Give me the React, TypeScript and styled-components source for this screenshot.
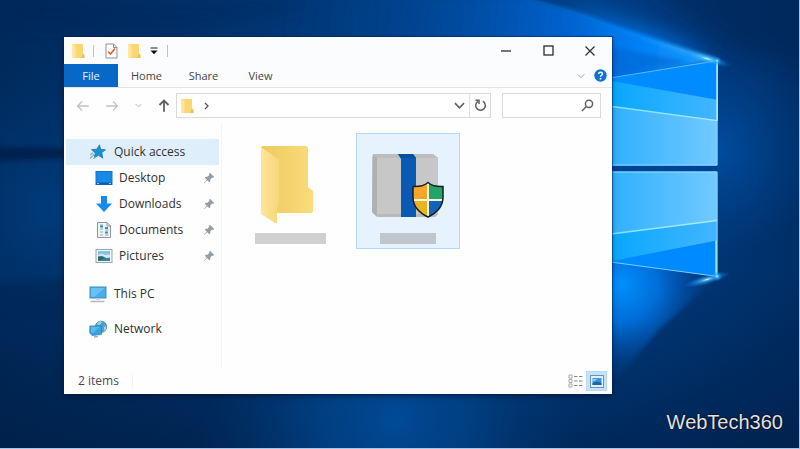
import React from "react";
import styled, { createGlobalStyle } from "styled-components";

const GlobalStyle = createGlobalStyle`
  * { box-sizing: border-box; }
  body {
    margin: 0;
    font-family: "Open Sans", "Noto Sans", sans-serif;
    font-size: 12px;
    line-height: 16px;
    color: #333;
    background: #00285a;
  }
  button, input {
    font: inherit;
    color: inherit;
    margin: 0;
    padding: 0;
    border: 0;
    background: none;
  }
  svg { display: block; flex: none; }
`;

const Desktop = styled.main`
  position: relative;
  display: flex;
  min-height: 100vh;
  padding: 37px 23.5% 55px 8%;
  overflow: hidden;
  box-shadow: inset -1px -1px 0 #a9c4e6;
`;

const WallpaperArt = styled.svg`
  position: absolute;
  inset: 0;
  width: 100%;
  height: 100%;
  padding: 0 1px 1px 0;
`;

const Watermark = styled.div`
  position: absolute;
  right: 17px;
  bottom: 15px;
  font-family: "Liberation Sans", Arial, sans-serif;
  font-size: 20px;
  line-height: 24px;
  color: #e2e2e2;
  text-shadow: 0 0 1px #000, 0 0 2px #001;
`;

const Window = styled.section`
  position: relative;
  flex: 1;
  min-width: 0;
  display: flex;
  flex-direction: column;
  background: #fefefe;
  box-shadow: 0 0 0 1px rgba(0, 30, 75, 0.45), 0 2px 5px rgba(0, 10, 40, 0.5);
`;

const TitleBar = styled.header`
  display: flex;
  align-items: center;
  justify-content: space-between;
  height: 27px;
  padding: 0 4px 0 7px;
  background: #fbfcfd;
`;

const QuickTools = styled.div`
  display: flex;
  align-items: center;
  gap: 8px;
`;

const Separator = styled.span`
  width: 1px;
  height: 12px;
  background: #c2c2c2;
`;

const ToolButton = styled.button<{ $narrow?: boolean }>`
  display: flex;
  justify-content: center;
  align-items: center;
  width: ${(p) => (p.$narrow ? 10 : 14)}px;
  height: 16px;
`;

const ToolPair = styled.div`
  display: flex;
  gap: 9px;
  padding-left: 2px;
`;

const WindowControls = styled.div`
  display: flex;
`;

const ControlButton = styled.button`
  display: grid;
  place-items: center;
  width: 42px;
  height: 26px;
  color: #2c2c2c;
  &:last-child { width: 36px; margin-left: 3px; }
`;

const Ribbon = styled.div`
  display: flex;
  align-items: center;
  justify-content: space-between;
  height: 24px;
  padding-right: 5px;
  background: #fbfcfd;
  border-bottom: 1px solid #e2e4e6;
`;

const Tabs = styled.nav`
  display: flex;
  height: 100%;
`;

const Tab = styled.button<{ $primary?: boolean }>`
  width: ${(p) => (p.$primary ? 54 : 57)}px;
  color: ${(p) => (p.$primary ? "#e9f3ff" : "#444")};
  background: ${(p) => (p.$primary ? "#0768c5" : "transparent")};
  font-size: 11px;
`;

const RibbonTools = styled.div`
  display: flex;
  align-items: center;
  gap: 9px;
`;

const IconButton = styled.button<{ $tone?: string }>`
  display: grid;
  place-items: center;
  color: ${(p) => p.$tone ?? "#606060"};
`;

const NavBar = styled.div`
  display: flex;
  align-items: center;
  gap: 11px;
  height: 35px;
  padding: 0 11px 0 12px;
`;

const NavButtons = styled.div`
  display: grid;
  grid-template-columns: 14px 14px 8px 14px;
  column-gap: 15px;
  width: 89px;
  align-items: center;
`;

const AddressBox = styled.div`
  display: flex;
  align-items: center;
  flex: 1;
  height: 25px;
  padding-left: 4px;
  border: 1px solid #d9d9d9;
  background: #fff;
`;

const PathInput = styled.input`
  flex: 1;
  min-width: 0;
  height: 22px;
  padding: 0 8px;
  outline: none;
`;

const RefreshButton = styled(IconButton)`
  width: 21px;
  height: 23px;
  margin-left: 4px;
  border-left: 1px solid #e2e2e2;
`;

const SearchBox = styled.label`
  display: flex;
  align-items: center;
  width: 99px;
  height: 25px;
  padding: 0 6px;
  border: 1px solid #d9d9d9;
  background: #fff;
  color: #606060;
`;

const Body = styled.div`
  display: flex;
  flex: 1;
`;

const Sidebar = styled.nav`
  width: 158px;
  padding: 16px 2px 0;
  border-right: 1px solid #f5f6f7;
`;

const NavItem = styled.a<{ $child?: boolean; $active?: boolean }>`
  display: flex;
  align-items: center;
  gap: ${(p) => (p.$child ? 6 : 7)}px;
  height: 26px;
  padding: 0 4px 0 ${(p) => (p.$child ? 29 : 23)}px;
  color: #303030;
  text-decoration: none;
  background: ${(p) => (p.$active ? "#dfeefb" : "transparent")};
`;

const NavLabel = styled.span`
  flex: 1;
  white-space: nowrap;
`;

const DeviceGroup = styled.div`
  display: grid;
  gap: 9px;
  padding-top: 12px;
`;

const Files = styled.div`
  display: flex;
  align-items: flex-start;
  gap: 14px;
  padding: 10px 16px;
`;

const FileTile = styled.button<{ $selected?: boolean }>`
  display: flex;
  flex-direction: column;
  justify-content: flex-end;
  align-items: center;
  gap: ${(p) => (p.$selected ? 14 : 8)}px;
  width: 104px;
  height: 116px;
  padding-bottom: 4px;
  border: 1px solid ${(p) => (p.$selected ? "#b4daf8" : "transparent")};
  background: ${(p) => (p.$selected ? "#e6f2fd" : "transparent")};
`;

const NamePlaceholder = styled.span<{ $short?: boolean }>`
  width: ${(p) => (p.$short ? 56 : 71)}px;
  height: 11px;
  background: ${(p) => (p.$short ? "#bfc6cd" : "#d0d0d0")};
`;

const StatusBar = styled.footer`
  display: flex;
  align-items: center;
  justify-content: space-between;
  height: 26px;
  padding: 0 5px 0 14px;
  color: #484858;
`;

const ItemCount = styled.span`
  padding-right: 13px;
  border-right: 1px solid #f3f4f5;
`;

const ViewModes = styled.div`
  display: flex;
`;

const ViewButton = styled.button<{ $active?: boolean }>`
  display: grid;
  place-items: center;
  width: 21px;
  height: 20px;
  border: 1px solid ${(p) => (p.$active ? "#b4dbf8" : "transparent")};
  background: ${(p) => (p.$active ? "#c5e3fa" : "transparent")};
`;

const Wallpaper = () => (
  <WallpaperArt viewBox="0 0 800 449" preserveAspectRatio="xMidYMid slice" aria-hidden="true">
    <defs>
      <linearGradient id="base" x1="0" x2="1">
        <stop offset="0" stopColor="#002a5c" />
        <stop offset=".3" stopColor="#003672" />
        <stop offset=".75" stopColor="#003f86" />
        <stop offset="1" stopColor="#002e66" />
      </linearGradient>
      <linearGradient id="floor" x1="0" y1="0" x2="0" y2="1">
        <stop offset=".6" stopColor="#001c42" stopOpacity="0" />
        <stop offset="1" stopColor="#001c42" stopOpacity=".65" />
      </linearGradient>
      <radialGradient id="left" gradientUnits="userSpaceOnUse" cx="50" cy="210" r="150">
        <stop offset="0" stopColor="#004488" stopOpacity=".65" />
        <stop offset="1" stopColor="#003a78" stopOpacity="0" />
      </radialGradient>
      <radialGradient id="pool" gradientUnits="userSpaceOnUse" cx="395" cy="420" r="200">
        <stop offset="0" stopColor="#004a96" />
        <stop offset=".4" stopColor="#00448a" stopOpacity=".75" />
        <stop offset="1" stopColor="#003470" stopOpacity="0" />
      </radialGradient>
      <radialGradient id="rightGlow" gradientUnits="userSpaceOnUse" cx="715" cy="150" r="110">
        <stop offset="0" stopColor="#0058b4" stopOpacity=".7" />
        <stop offset="1" stopColor="#004a9a" stopOpacity="0" />
      </radialGradient>
      <radialGradient id="lowGlow" gradientUnits="userSpaceOnUse" cx="622" cy="285" r="105">
        <stop offset="0" stopColor="#0090ff" />
        <stop offset=".35" stopColor="#0078ea" stopOpacity=".85" />
        <stop offset=".7" stopColor="#005cc0" stopOpacity=".3" />
        <stop offset="1" stopColor="#004590" stopOpacity="0" />
      </radialGradient>
      <radialGradient id="spark">
        <stop offset="0" stopColor="#dff7ff" />
        <stop offset=".25" stopColor="#4cc3ff" stopOpacity=".7" />
        <stop offset="1" stopColor="#0080ff" stopOpacity="0" />
      </radialGradient>
      <linearGradient id="beamTop" gradientUnits="userSpaceOnUse" x1="718" y1="61" x2="280" y2="10">
        <stop offset="0" stopColor="#1aa2ff" />
        <stop offset=".18" stopColor="#0080f6" />
        <stop offset=".35" stopColor="#0062ce" />
        <stop offset=".6" stopColor="#004ea6" stopOpacity=".8" />
        <stop offset="1" stopColor="#00408a" stopOpacity="0" />
      </linearGradient>
      <linearGradient id="ray" gradientUnits="userSpaceOnUse" x1="718" y1="61" x2="525" y2="0">
        <stop offset="0" stopColor="#6fd4ff" />
        <stop offset=".4" stopColor="#0c8dff" />
        <stop offset="1" stopColor="#0a70dc" stopOpacity=".5" />
      </linearGradient>
      <linearGradient id="glass" x1="0" x2="1">
        <stop offset="0" stopColor="#27adff" />
        <stop offset="1" stopColor="#73c9ff" />
      </linearGradient>
      <linearGradient id="glassMid" x1="0" x2="1">
        <stop offset="0" stopColor="#00a6ff" />
        <stop offset="1" stopColor="#43b5ff" />
      </linearGradient>
      <linearGradient id="sill" gradientUnits="userSpaceOnUse" x1="600" y1="0" x2="718" y2="0">
        <stop offset="0" stopColor="#7fe0ff" />
        <stop offset="1" stopColor="#a8ecff" />
      </linearGradient>
      <filter id="soft" x="-30%" y="-30%" width="160%" height="160%"><feGaussianBlur stdDeviation="9" /></filter>
      <filter id="fine" x="-20%" y="-20%" width="140%" height="140%"><feGaussianBlur stdDeviation="2" /></filter>
    </defs>
    <rect width="800" height="449" fill="url(#base)" />
    <rect width="800" height="449" fill="url(#left)" />
    <path d="M0 0H330L180 36L0 24Z" fill="#002454" opacity=".4" filter="url(#soft)" />
    <path d="M-10 147L70 149V158L-10 162Z" fill="#001f48" opacity=".8" filter="url(#fine)" />
    <path d="M-10 286L70 278V320H-10Z" fill="#00214c" opacity=".3" filter="url(#fine)" />
    <rect width="800" height="449" fill="url(#floor)" />
    <rect y="390" width="800" height="59" fill="url(#pool)" />
    <rect x="600" width="200" height="300" fill="url(#rightGlow)" />
    <path d="M640 -20H820V70L740 50Z" fill="#002858" opacity=".6" filter="url(#soft)" />
    <path d="M600 240L718 277L660 330L600 400Z" fill="url(#lowGlow)" filter="url(#fine)" />
    <path d="M560 8Q650 15 718 61L640 50Z" fill="#0070de" opacity=".75" filter="url(#soft)" />
    <path d="M718 61Q610 22 525 -2H280V50H600V82Z" fill="url(#beamTop)" filter="url(#fine)" />
    <path d="M690 62L600 45V80Z" fill="#0062d0" opacity=".55" filter="url(#fine)" />
    <path d="M718 61Q640 38 600 22T525 -1" fill="none" stroke="url(#ray)" strokeWidth="3" opacity=".7" filter="url(#fine)" />
    <path d="M718 61Q640 38 600 22T525 -1" fill="none" stroke="url(#ray)" opacity=".3" />
    <rect x="600" y="165" width="118" height="8" fill="#004394" />
    <path d="M600 80L718 61V166H600Z" fill="#008cff" />
    <path d="M600 79L718 100V121L600 105Z" fill="url(#glassMid)" />
    <path d="M600 105L718 121V166H600Z" fill="url(#glass)" />
    <path d="M600 172H718V277L600 261Z" fill="#008aff" />
    <path d="M600 235L718 221V241L600 264Z" fill="url(#glassMid)" />
    <path d="M600 172H718V221L600 236Z" fill="url(#glass)" />
    <g fill="none" stroke="url(#sill)">
      <path d="M600 80L718 61" opacity=".6" />
      <path d="M600 105L718 121" strokeWidth="1.500" />
      <path d="M600 236L718 221" strokeWidth="1.500" />
      <path d="M600 261L718 277" opacity=".8" />
    </g>
    <g fill="none" stroke="#8fdcff">
      <path d="M600 165.500H718V61" />
      <path d="M600 172.500H718V277" />
      <path d="M718 61V121M717 241V277" stroke="#a8efff" strokeWidth="1.500" />
    </g>
    <ellipse cx="708" cy="59" rx="26" ry="5" fill="url(#spark)" transform="rotate(16 708 59)" />
    <ellipse cx="708" cy="280" rx="24" ry="5" fill="url(#spark)" transform="rotate(-16 708 280)" />
    <circle cx="718" cy="61" r="4" fill="url(#spark)" />
    <circle cx="718" cy="277" r="5" fill="url(#spark)" />
  </WallpaperArt>
);

const SmallFolder = () => (
  <svg width="13" height="16" viewBox="0 0 13 16" aria-hidden="true">
    <path d="M.5 1H11V11.500L12.500 12.500V15H.5Z" fill="#f9d774" />
    <path d="M.5 1L3.500 2.500V15H.5Z" fill="#ffe597" />
    <path d="M11 10L12.500 12.500V15H9Z" fill="#ecc25c" />
  </svg>
);

const CheckedPage = () => (
  <svg width="13" height="16" viewBox="0 0 13 16" fill="none" aria-hidden="true">
    <path d="M1 1H8.500L12 4.500V15H1Z" fill="#fff" stroke="#8f8f8f" />
    <path d="M8.500 1V4.500H12" stroke="#8f8f8f" />
    <path d="M3 8.500L5.500 11L10 5.500" stroke="#e0632c" strokeWidth="1.600" />
  </svg>
);

const Chevron = ({ w = 8, bold = false }: { w?: number; bold?: boolean }) => (
  <svg width={w} height={w} viewBox="0 0 8 8" fill="none" stroke="currentColor" strokeWidth={bold ? 1.2 : 1} aria-hidden="true">
    <path d="M.7 2.300L4 5.700L7.300 2.300" />
  </svg>
);

const Arrow = ({ turn, bold = false }: { turn: number; bold?: boolean }) => (
  <svg width="14" height="14" viewBox="0 0 14 14" fill="none" stroke="currentColor" strokeWidth={bold ? 1.8 : 1.3} aria-hidden="true">
    <path transform={`rotate(${turn} 7 7)`} d="M12.800 7H1.800M6 2.500L1.500 7L6 11.500" />
  </svg>
);

const StarIcon = () => (
  <svg width="18" height="16" viewBox="0 0 18 16" aria-hidden="true">
    <path d="M10.500 .8L11.600 5.200L16.500 5.800L12.800 8.600L13.800 14.200L9.500 11.300L5.200 14L6.300 9L2.500 5.600L7.700 5.200Z" fill="#1b8fcf" stroke="#1c7ab4" strokeWidth=".8" />
    <path d="M1 14.500L5.500 10M1.200 11L4 8.500M4.500 14.800L6.500 13" stroke="#7fb4c4" strokeWidth="1.200" />
  </svg>
);

const DesktopIcon = () => (
  <svg width="18" height="16" viewBox="0 0 18 16" aria-hidden="true">
    <rect x="1" y="1.500" width="16" height="13" fill="#168ae8" stroke="#1573c4" />
    <path d="M1 12.500H17V14.500H1Z" fill="#0b5cb0" />
    <path d="M2 13.500H4M14 13.500H16" stroke="#8cc8f5" />
  </svg>
);

const DownloadIcon = () => (
  <svg width="18" height="18" viewBox="0 0 18 18" aria-hidden="true">
    <path d="M6 1H12V8.500H17L9 17L1 8.500H6Z" fill="#168be8" />
  </svg>
);

const DocumentIcon = () => (
  <svg width="18" height="18" viewBox="0 0 18 18" aria-hidden="true">
    <path d="M2.500 1.500H12L15.500 5V16.500H2.500Z" fill="#f2f5f7" stroke="#8e979d" />
    <path d="M12 1.500V5H15.500" fill="none" stroke="#8e979d" />
    <path d="M5 4H8M5 8H8M5 11H8M5 14H8M10 9H13.500M10 14H13.500" stroke="#8da5b7" />
    <path d="M5 5.500H8M10 7H13M10 11.500H13" stroke="#3190c5" strokeWidth="2" />
  </svg>
);

const PictureIcon = () => (
  <svg width="18" height="16" viewBox="0 0 18 16" aria-hidden="true">
    <rect x="1" y="1.500" width="16" height="13" fill="#f4f7f8" stroke="#9aa6ac" />
    <rect x="3" y="3" width="12" height="10" fill="#85c4ea" />
    <path d="M3 7L7 5.500L10 7L15 6.500V10H3Z" fill="#cfe8f5" />
    <path d="M3 8.500L7 8L15 12V13H3Z" fill="#286f66" />
    <path d="M8 11L15 9.500V13H3Z" fill="#3b81ab" />
  </svg>
);

const ComputerIcon = () => (
  <svg width="18" height="18" viewBox="0 0 18 18" aria-hidden="true">
    <rect x="1" y="2" width="16" height="11" fill="#49aeea" stroke="#3c8fc3" />
    <path d="M2 3H16L5 12H2Z" fill="#6cc0f0" />
    <path d="M7 13.500H11V15H7Z" fill="#cad7dd" />
    <path d="M1.500 16.500H15.500" stroke="#b1babf" strokeWidth="1.500" />
  </svg>
);

const NetworkIcon = () => (
  <svg width="18" height="18" viewBox="0 0 18 18" aria-hidden="true">
    <circle cx="12" cy="6.800" r="5.700" fill="#4f9fd0" stroke="#397fa6" strokeWidth=".7" />
    <path d="M8 4Q10 0 13 2L11 4.500L9 5ZM15 7L17 6V9L15 11Z" fill="#a8d2e6" />
    <path d="M.8 6L12.500 5.800V14.500L3 15.500L.8 13Z" fill="#38a1df" stroke="#2b81b4" strokeWidth=".7" />
    <path d="M2 7L11 6.800L4 13L2 12Z" fill="#5cb9e8" />
    <path d="M5 17L9 16.600" stroke="#9ba9b1" strokeWidth="1.300" />
  </svg>
);

const PinIcon = () => (
  <svg width="12" height="12" viewBox="0 0 12 12" aria-hidden="true">
    <path d="M7 .8L11.200 5L10 6L9.200 5.500L7.300 7.500V9.300L6.300 10.200L4.300 8.200L1 11.300L.7 11L3.800 7.700L1.800 5.700L2.700 4.700H4.500L6.500 2.800L6 2Z" fill="#959ca4" />
  </svg>
);

const LargeFolder = () => (
  <svg width="60" height="80" viewBox="0 0 60 80" aria-hidden="true">
    <defs>
      <linearGradient id="folderBack" x1="0" x2="1"><stop stopColor="#edc960" /><stop offset="1" stopColor="#fadc7c" /></linearGradient>
      <linearGradient id="folderFlap" x1="0" x2="1"><stop stopColor="#ffe59a" /><stop offset="1" stopColor="#f7d778" /></linearGradient>
    </defs>
    <path d="M2 1H46Q48 1 48 3V42L53 46V66Q53 68 51 68H15L1 3Z" fill="url(#folderBack)" />
    <path d="M1 2L18 14Q19 15 19 17V59L17 63V77Q17 79 15 78L1 69Z" fill="url(#folderFlap)" />
  </svg>
);

const InstallerIcon = () => (
  <svg width="74" height="66" viewBox="0 0 74 66" aria-hidden="true">
    <path d="M4 1H62L67 5V61L64 64H7L1 59V3Z" fill="#c8c7c7" />
    <path d="M2 1L6 5V64L1 59Z" fill="#b0b0b0" />
    <path d="M2 1H62L67 5H6Z" fill="#bdbdbd" />
    <path d="M5 61H67L64 64H7Z" fill="#bababa" />
    <path d="M27 1H42L45 5V64H30V6Z" fill="#0a5ab5" />
    <path d="M27 1H42L45 5H30Z" fill="#084e9f" />
    <clipPath id="shieldClip"><path d="M57 29.500Q62 34 72 33.500V44Q72 57 57 64Q42 57 42 44V33.500Q52 34 57 29.500Z" /></clipPath>
    <g clipPath="url(#shieldClip)">
      <path d="M42 29H57V47H42Z" fill="#f8a72a" />
      <path d="M57 29H72V47H57Z" fill="#21a567" />
      <path d="M42 47H57V65H42Z" fill="#e9b422" />
      <path d="M57 47H72V65H57Z" fill="#1264ba" />
      <path d="M57 29V65M42 47H72" stroke="#fff4d7" strokeWidth="2" />
    </g>
    <path d="M57 29.500Q62 34 72 33.500V44Q72 57 57 64Q42 57 42 44V33.500Q52 34 57 29.500Z" fill="none" stroke="#171e20" strokeWidth="1.500" />
  </svg>
);

const DetailsIcon = () => (
  <svg width="15" height="14" viewBox="0 0 15 14" fill="none" aria-hidden="true">
    <path d="M1 1H4V4H1ZM1 5.500H4V8.500H1ZM1 10H4V13H1Z" stroke="#a8a8a8" />
    <path d="M6 2.500H9.500M11 2.500H14.500M6 7H9.500M11 7H14.500M6 11.500H9.500M11 11.500H14.500" stroke="#888" />
  </svg>
);

const ThumbnailIcon = () => (
  <svg width="14" height="13" viewBox="0 0 14 13" aria-hidden="true">
    <rect x=".5" y=".5" width="13" height="12" fill="#e2f1fb" stroke="#6d94b2" />
    <rect x="2.500" y="3" width="9" height="7" fill="#3b95dc" />
    <path d="M2.500 8L7 6.500L11.500 8V10H2.500Z" fill="#1a66a8" />
    <path d="M3 4H7L5 6H3Z" fill="#8fcbf2" />
  </svg>
);

const pinned = [
  { label: "Desktop", Icon: DesktopIcon },
  { label: "Downloads", Icon: DownloadIcon },
  { label: "Documents", Icon: DocumentIcon },
  { label: "Pictures", Icon: PictureIcon },
];

export default function App() {
  return (
    <>
      <GlobalStyle />
      <Desktop>
        <Wallpaper />
        <Window aria-label="File Explorer">
          <TitleBar>
            <QuickTools>
              <ToolButton aria-label="Window menu"><SmallFolder /></ToolButton>
              <Separator />
              <ToolPair>
                <ToolButton aria-label="Properties"><CheckedPage /></ToolButton>
                <ToolButton aria-label="New folder"><SmallFolder /></ToolButton>
              </ToolPair>
              <ToolButton $narrow aria-label="Customize toolbar">
                <svg width="8" height="8" viewBox="0 0 8 8" aria-hidden="true">
                  <path d="M.5 1H7.500" stroke="#222" /><path d="M.5 3.500H7.500L4 7.300Z" fill="#111" />
                </svg>
              </ToolButton>
              <Separator />
            </QuickTools>
            <WindowControls>
              <ControlButton aria-label="Minimize">
                <svg width="10" height="10" viewBox="0 0 10 10" stroke="currentColor" strokeWidth="1.300"><path d="M0 5H10" /></svg>
              </ControlButton>
              <ControlButton aria-label="Maximize">
                <svg width="11" height="11" viewBox="0 0 11 11" fill="none" stroke="currentColor" strokeWidth="1.300"><rect x="1" y="1" width="9" height="9" /></svg>
              </ControlButton>
              <ControlButton aria-label="Close">
                <svg width="10" height="10" viewBox="0 0 10 10" stroke="currentColor" strokeWidth="1.200"><path d="M.5 .5L9.500 9.500M9.500 .5L.5 9.500" /></svg>
              </ControlButton>
            </WindowControls>
          </TitleBar>
          <Ribbon>
            <Tabs>
              <Tab $primary>File</Tab>
              <Tab>Home</Tab>
              <Tab>Share</Tab>
              <Tab>View</Tab>
            </Tabs>
            <RibbonTools>
              <IconButton $tone="#aaa" aria-label="Expand the ribbon"><Chevron /></IconButton>
              <IconButton aria-label="Help">
                <svg width="13" height="13" viewBox="0 0 13 13" fill="none" aria-hidden="true">
                  <circle cx="6.500" cy="6.500" r="6.200" fill="#0c73d2" />
                  <path d="M4.600 5Q4.700 3.200 6.500 3.200Q8.400 3.200 8.400 4.800Q8.400 5.700 7.400 6.300Q6.500 6.800 6.500 7.800" stroke="#fff" strokeWidth="1.400" />
                  <circle cx="6.500" cy="9.700" r=".9" fill="#fff" />
                </svg>
              </IconButton>
            </RibbonTools>
          </Ribbon>
          <NavBar>
            <NavButtons>
              <IconButton $tone="#c4c4c4" aria-label="Back"><Arrow turn={0} /></IconButton>
              <IconButton $tone="#c4c4c4" aria-label="Forward"><Arrow turn={180} /></IconButton>
              <IconButton $tone="#b5b5b5" aria-label="Recent locations"><Chevron w={7} /></IconButton>
              <IconButton aria-label="Up"><Arrow turn={90} bold /></IconButton>
            </NavButtons>
            <AddressBox>
              <SmallFolder />
              <svg width="24" height="10" viewBox="0 0 24 10" fill="none" stroke="#555" strokeWidth="1.300" aria-hidden="true"><path d="M11 2L14 5L11 8" /></svg>
              <PathInput aria-label="Address" />
              <IconButton aria-label="Previous locations"><Chevron w={11} bold /></IconButton>
              <RefreshButton aria-label="Refresh">
                <svg width="13" height="13" viewBox="0 0 13 13" fill="none" stroke="currentColor" strokeWidth="1.500" aria-hidden="true">
                  <path d="M8.800 2.200A4.800 4.800 0 1 1 4 2.300M1.500 1.300H5V5" />
                </svg>
              </RefreshButton>
            </AddressBox>
            <SearchBox>
              <PathInput type="text" aria-label="Search" />
              <svg width="13" height="13" viewBox="0 0 13 13" fill="none" stroke="currentColor" strokeWidth="1.500" aria-hidden="true">
                <circle cx="8" cy="4.800" r="3.600" /><path d="M5.300 7.500L1 12" />
              </svg>
            </SearchBox>
          </NavBar>
          <Body>
            <Sidebar aria-label="Locations">
              <NavItem href="#quick" $active><StarIcon /><NavLabel>Quick access</NavLabel></NavItem>
              {pinned.map(({ label, Icon }) => (
                <NavItem key={label} href={`#${label}`} $child>
                  <Icon /><NavLabel>{label}</NavLabel><PinIcon />
                </NavItem>
              ))}
              <DeviceGroup>
                <NavItem href="#pc"><ComputerIcon /><NavLabel>This PC</NavLabel></NavItem>
                <NavItem href="#network"><NetworkIcon /><NavLabel>Network</NavLabel></NavItem>
              </DeviceGroup>
            </Sidebar>
            <Files>
              <FileTile aria-label="Folder"><LargeFolder /><NamePlaceholder /></FileTile>
              <FileTile aria-label="Installer" $selected><InstallerIcon /><NamePlaceholder $short /></FileTile>
            </Files>
          </Body>
          <StatusBar>
            <ItemCount>2 items</ItemCount>
            <ViewModes>
              <ViewButton aria-label="Details view"><DetailsIcon /></ViewButton>
              <ViewButton aria-label="Large icons view" $active><ThumbnailIcon /></ViewButton>
            </ViewModes>
          </StatusBar>
        </Window>
        <Watermark>WebTech360</Watermark>
      </Desktop>
    </>
  );
}
